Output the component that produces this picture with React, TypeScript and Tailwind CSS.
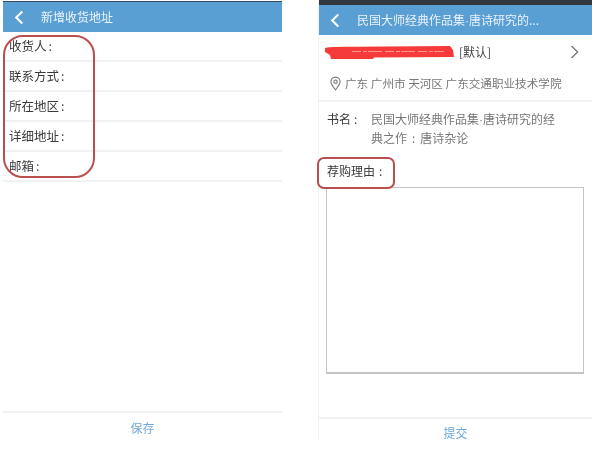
const cjk = { fontFamily: '"Noto Sans CJK SC", "Liberation Sans", sans-serif' };

function Back({ className }: { className: string }) {
  return (
    <svg viewBox="0 0 10 16" className={className} fill="none" stroke="#ffffff" strokeWidth="2.2">
      <path d="M8.5 1.5 2 8l6.5 6.5" />
    </svg>
  );
}

function Dot() {
  return <span className="font-['Liberation_Sans'] leading-none">·</span>;
}

function Row({ label }: { label: string }) {
  return (
    <div className="h-[30px] border-b-2 border-[#f1f1f1] pl-[6px] text-[12.500px] leading-[27px] text-[#3a3a3a]">
      {label}
      <span className="ml-[2px]">:</span>
    </div>
  );
}

function AddressPanel() {
  return (
    <section className="relative ml-[3px] flex h-[442px] w-[279px] flex-col bg-white pt-px">
      <div className="h-[1px] bg-[#3b4a5a]" />
      <header className="flex h-[30px] items-center bg-[#5a9fd4] pl-[11px] text-[12px] text-[#eaf3fa]">
        <Back className="h-[15px] w-[10px]" />
        <span className="ml-[17px]">新增收货地址</span>
      </header>
      <div>
        {["收货人", "联系方式", "所在地区", "详细地址", "邮箱"].map((l) => (
          <Row key={l} label={l} />
        ))}
      </div>
      <div className="flex-1" />
      <footer className="flex h-[31px] items-center justify-center border-t-2 border-[#f1f1f1] text-[12px] text-[#6fa9d8]">
        保存
      </footer>
      <div className="pointer-events-none absolute left-0 top-[35px] h-[143px] w-[92px] rounded-[20px] border-2 border-[#b9504f]" />
    </section>
  );
}

function ReasonPanel() {
  return (
    <section className="relative ml-[36px] flex h-[441px] w-[274px] flex-col border-l border-[#eef3f8] bg-white">
      <div className="h-[5px] bg-[#333840]" />
      <header className="flex h-[30px] items-center bg-[#5a9fd4] pl-[11px] text-[12px] text-[#eaf3fa]">
        <Back className="h-[15px] w-[10px]" />
        <span className="ml-[17px] whitespace-nowrap">
          民国大师经典作品集
          <Dot />
          唐诗研究的...
        </span>
      </header>
      <div className="flex h-[34px] items-center pl-[5px] pr-[13px] text-[12px] text-[#444444]">
        <svg viewBox="0 0 130 16" className="h-[16px] w-[130px]">
          <path d="M1 4 Q4 2.500 30 2.800 L126 2 L129 6 L130 13 L50 13.500 L49 15 L7 15 L6 11 L1 8 Z" fill="#f53a3a" />
          <path d="M28 7.500 L120 7.500" stroke="#fbb8b8" strokeWidth="0.7" strokeDasharray="9 2 4 1 14 3" />
        </svg>
        <span className="ml-[5px]">[默认]</span>
        <svg viewBox="0 0 9 14" className="ml-auto h-[14px] w-[9px]" fill="none" stroke="#777777" strokeWidth="1.4">
          <path d="M1.5 1 7.500 7l-6 6" />
        </svg>
      </div>
      <div className="flex h-[33px] items-center border-b-2 border-[#f1f1f1] pb-[2px] pl-[11px] text-[11.600px] text-[#777777]">
        <svg viewBox="0 0 12 16" className="h-[15px] w-[11px]" fill="none" stroke="#777777" strokeWidth="1.2">
          <path d="M6 15C3 11 1 8.500 1 6a5 5 0 0 1 10 0c0 2.500-2 5-5 9Z" />
          <circle cx="6" cy="6" r="1.800" />
        </svg>
        <span className="ml-[4px] whitespace-nowrap">广东 广州市 天河区 广东交通职业技术学院</span>
      </div>
      <div className="mt-[7px] flex pl-[8px] text-[12px] leading-[19px]">
        <span className="w-[44px] shrink-0 text-[12px] text-[#3a3a3a]">
          书名
          <span className="ml-[3px]">:</span>
        </span>
        <div className="text-[#777777]">
          <div className="whitespace-nowrap">
            民国大师经典作品集
            <Dot />
            唐诗研究的经
          </div>
          <div className="whitespace-nowrap">
            典之作<span className="mx-[5px]">:</span>唐诗杂论
          </div>
        </div>
      </div>
      <div className="mt-[15px] pl-[8px] text-[12px] leading-[18px] text-[#3a3a3a]">
        荐购理由<span className="ml-[4px]">:</span>
      </div>
      <div className="ml-[7px] mr-[8px] mt-[7px] h-[187px] border border-b-2 border-[#c4c4c4]" />
      <div className="flex-1" />
      <footer className="flex h-[24px] items-center justify-center border-t-2 border-[#f1f1f1] pt-[5px] text-[12px] text-[#6fa9d8]">
        提交
      </footer>
      <div className="pointer-events-none absolute left-[-2px] top-[157px] h-[32px] w-[78px] rounded-[7px] border-2 border-[#b9504f]" />
    </section>
  );
}

export default function App() {
  return (
    <div className="flex h-[458px] w-[592px] items-start overflow-hidden bg-white blur-[0.35px]" style={cjk}>
      <AddressPanel />
      <ReasonPanel />
    </div>
  );
}
